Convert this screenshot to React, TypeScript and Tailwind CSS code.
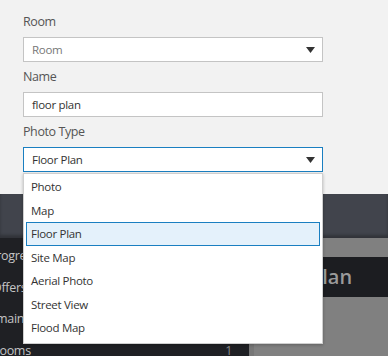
import React from "react";

const types = [
  "Photo",
  "Map",
  "Floor Plan",
  "Site Map",
  "Aerial Photo",
  "Street View",
  "Flood Map",
];

const nav = [
  { label: "Progress", cls: "ml-[-11px]" },
  { label: "Offers", cls: "ml-[-8px]" },
  { label: "Domain", cls: "ml-[-20px]" },
  { label: "Rooms", cls: "ml-[-8px]" },
];

const Caret = () => (
  <svg width="9" height="6" viewBox="0 0 9 6" className="shrink-0">
    <path d="M0 0H9L4.5 6Z" fill="#333" />
  </svg>
);

const App = () => {
  return (
    <div className="relative w-[388px] h-[356px] overflow-hidden bg-[#f2f2f2] font-['Open_Sans',sans-serif]">
      {/* Form */}
      <div className="h-[194px] pl-[23px] pt-[12px] flex flex-col">
        <label className="h-[20px] leading-[20px] text-[12.5px] tracking-[-0.4px] text-[#555]">Room</label>
        <div className="mt-[5px] w-[300px] h-[25px] flex items-center justify-between border border-[#c4c4c4] bg-white pl-[8px] pr-[7px]">
          <span className="text-[11.5px] tracking-[-0.3px] text-[#777]">Room</span>
          <Caret />
        </div>
        <label className="mt-[5px] h-[20px] leading-[20px] text-[12.5px] tracking-[-0.4px] text-[#555]">Name</label>
        <div className="mt-[5px] w-[300px] h-[25px] flex items-center border border-[#c4c4c4] bg-white pl-[8px]">
          <span className="text-[11.5px] tracking-[-0.3px] text-[#333]">floor plan</span>
        </div>
        <label className="mt-[5px] h-[20px] leading-[20px] text-[12.5px] tracking-[-0.4px] text-[#555]">Photo Type</label>
        <div className="relative mt-[5px] w-[300px]">
          <div className="h-[25px] flex items-center justify-between border border-[#1a7fc1] bg-white pl-[8px] pr-[7px]">
            <span className="text-[11.5px] tracking-[-0.3px] text-[#333]">Floor Plan</span>
            <Caret />
          </div>
          {/* Open list */}
          <ul className="absolute z-10 left-0 top-[26px] w-[300px] bg-white border border-[#cfcfcf] shadow-[0_1px_3px_rgba(0,0,0,0.25)] pt-[1px] pb-[3px]">
            {types.map((t) => (
              <li
                key={t}
                className={
                  t === "Floor Plan"
                    ? "mx-[2px] h-[23.5px] flex items-center px-[4px] border border-[#1a7fc1] bg-[#e4f1fb] text-[11.5px] tracking-[-0.3px] text-[#333]"
                    : "mx-[2px] h-[23.5px] flex items-center px-[4px] border border-transparent text-[11.5px] tracking-[-0.3px] text-[#333]"
                }
              >
                {t}
              </li>
            ))}
          </ul>
        </div>
      </div>

      {/* Header band */}
      <div className="h-[44px] bg-[#41444c] shadow-[inset_0_-3px_3px_rgba(0,0,0,0.25)]" />

      {/* Page below */}
      <div className="flex h-[118px]">
        <div className="w-[249px] bg-[#1f2024] flex flex-col pt-[3px]">
          {nav.map((n, i) => (
            <div key={n.label} className="shrink-0 h-[31.5px] flex items-center justify-between pr-[17px] text-[12.5px] tracking-[-0.3px] text-[#c4c4c4]">
              <span className={n.cls}>{n.label}</span>
              {i === 3 && <span className="text-[#8a8a8a]">1</span>}
            </div>
          ))}
        </div>
        <div className="w-[5px] bg-[#767676]" />
        <div className="flex-1 bg-[#808080] pt-[19px]">
          <div className="h-[40px] bg-[#1c1d21] flex items-center pl-[56px]">
            <span className="text-[20px] font-semibold text-[#9a9a9a]">Plan</span>
          </div>
        </div>
      </div>
    </div>
  );
};

export default App;
